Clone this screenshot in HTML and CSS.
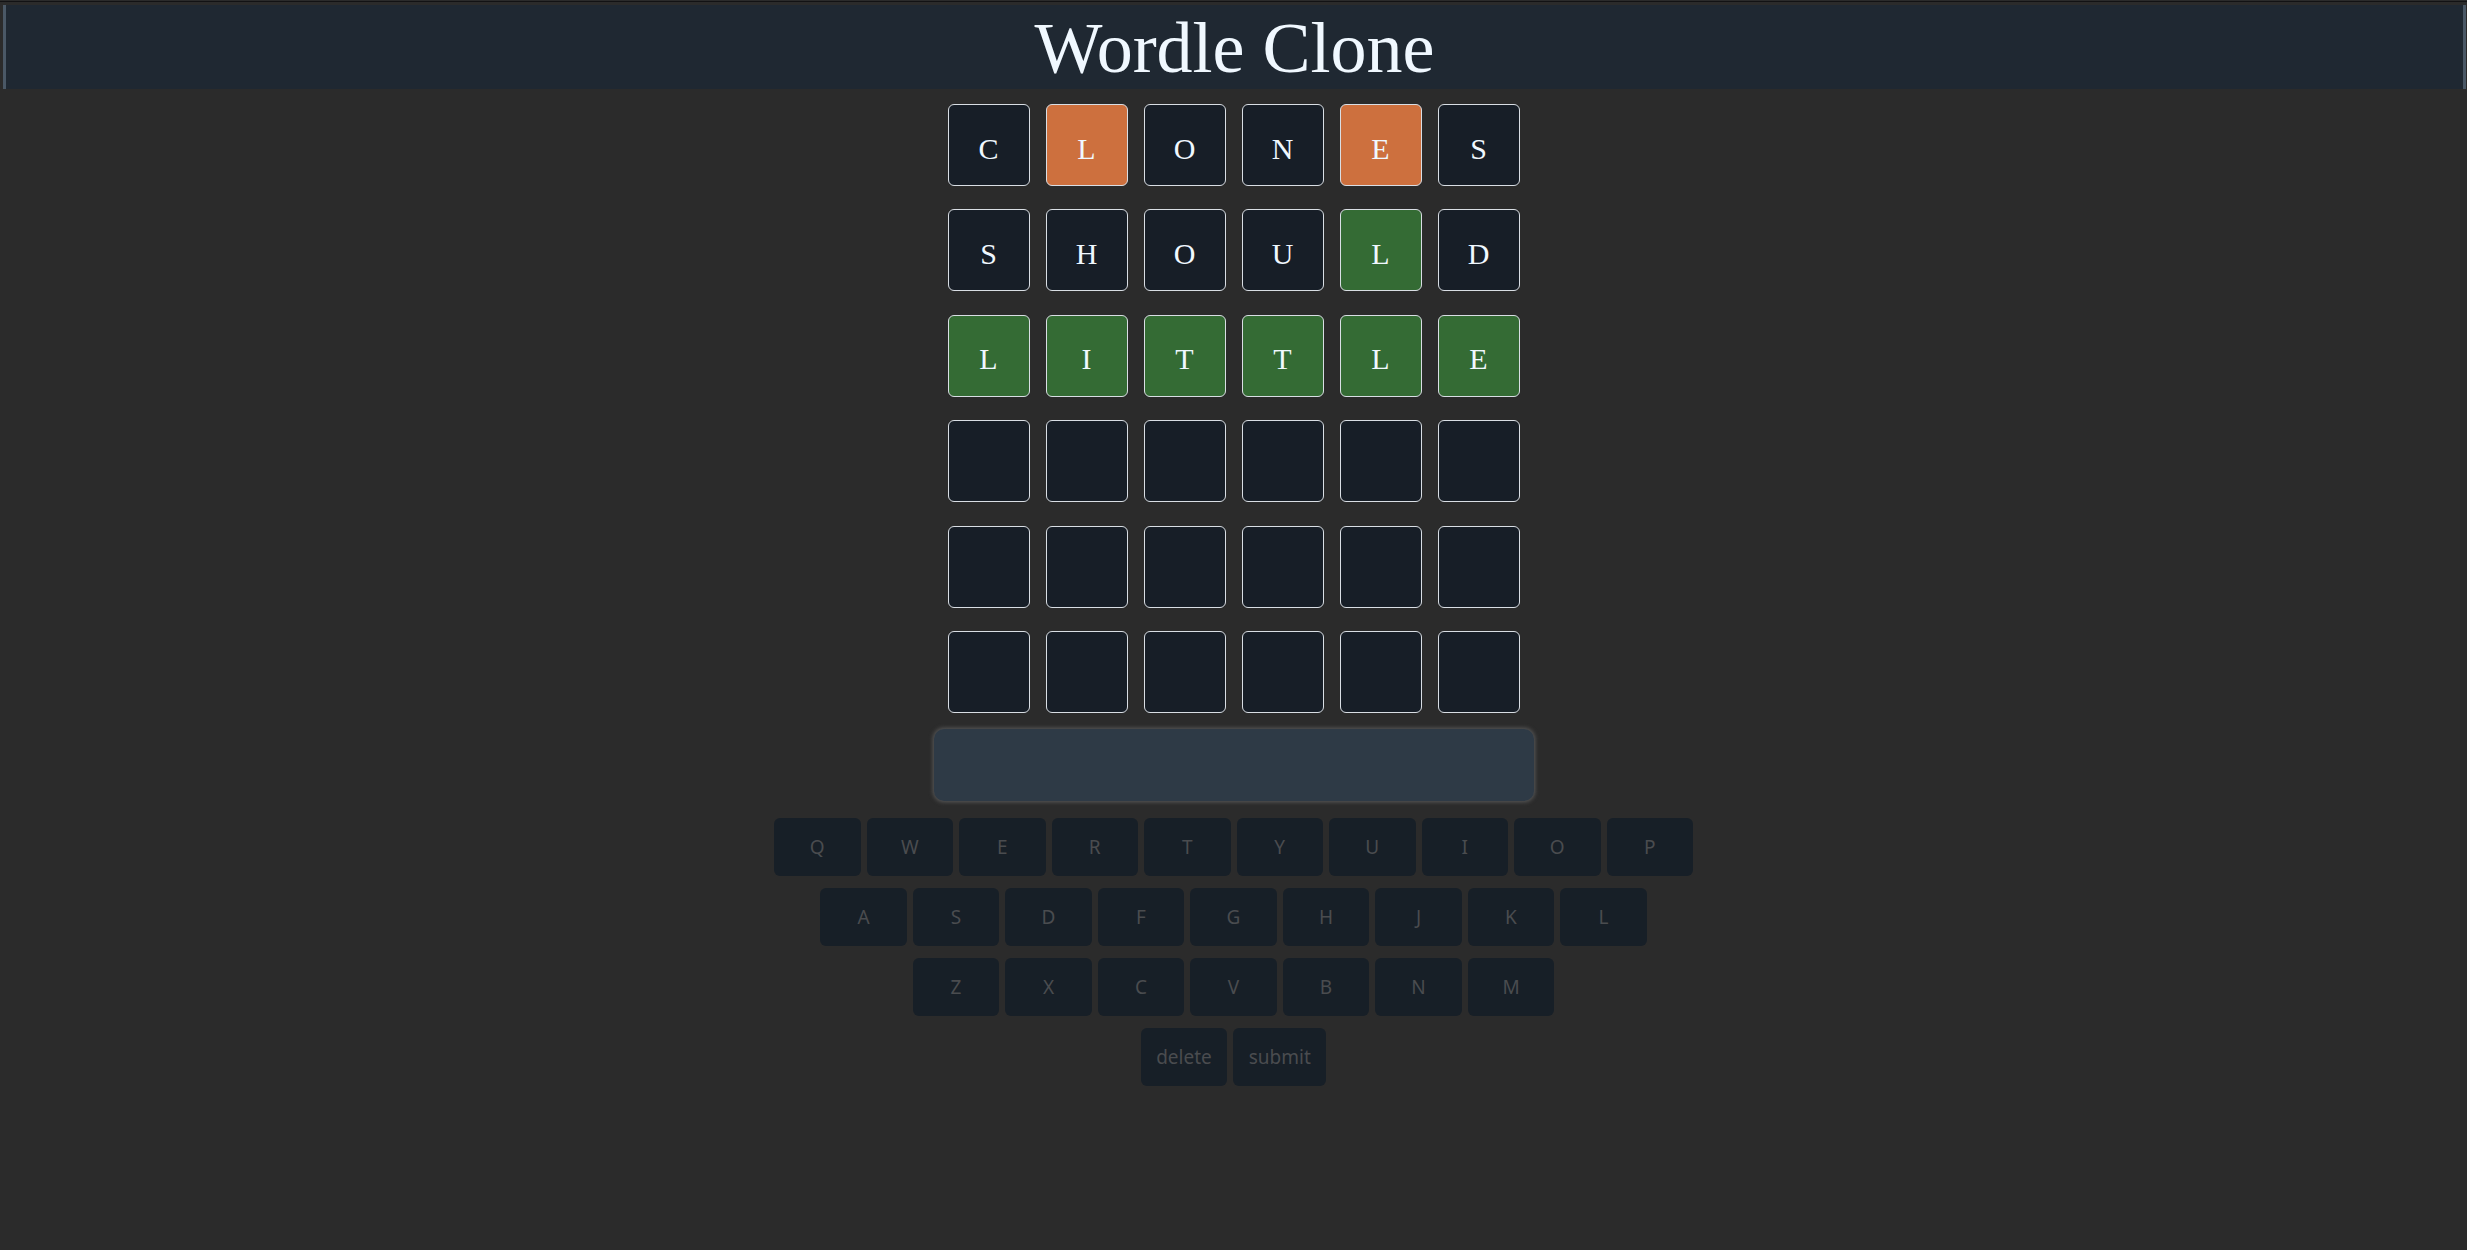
FILE: index.html
```html
<!DOCTYPE html>
<html lang="en">
<head>
<meta charset="utf-8">
<title>Wordle Clone</title>
<link rel="stylesheet" href="styles.css">
</head>
<body>
<header class="header"><h1 class="title">Wordle Clone</h1></header>
<main class="game">
  <div class="board">
    <div class="row">
      <div class="tile">C</div><div class="tile tile-present">L</div><div class="tile">O</div><div class="tile">N</div><div class="tile tile-present">E</div><div class="tile">S</div>
    </div>
    <div class="row">
      <div class="tile">S</div><div class="tile">H</div><div class="tile">O</div><div class="tile">U</div><div class="tile tile-correct">L</div><div class="tile">D</div>
    </div>
    <div class="row">
      <div class="tile tile-correct">L</div><div class="tile tile-correct">I</div><div class="tile tile-correct">T</div><div class="tile tile-correct">T</div><div class="tile tile-correct">L</div><div class="tile tile-correct">E</div>
    </div>
    <div class="row">
      <div class="tile"></div><div class="tile"></div><div class="tile"></div><div class="tile"></div><div class="tile"></div><div class="tile"></div>
    </div>
    <div class="row">
      <div class="tile"></div><div class="tile"></div><div class="tile"></div><div class="tile"></div><div class="tile"></div><div class="tile"></div>
    </div>
    <div class="row">
      <div class="tile"></div><div class="tile"></div><div class="tile"></div><div class="tile"></div><div class="tile"></div><div class="tile"></div>
    </div>
  </div>
  <input class="guess-input" type="text" disabled>
  <div class="keyboard">
    <div class="key-row">
      <button class="key" disabled>Q</button><button class="key" disabled>W</button><button class="key" disabled>E</button><button class="key" disabled>R</button><button class="key" disabled>T</button><button class="key" disabled>Y</button><button class="key" disabled>U</button><button class="key" disabled>I</button><button class="key" disabled>O</button><button class="key" disabled>P</button>
    </div>
    <div class="key-row">
      <button class="key" disabled>A</button><button class="key" disabled>S</button><button class="key" disabled>D</button><button class="key" disabled>F</button><button class="key" disabled>G</button><button class="key" disabled>H</button><button class="key" disabled>J</button><button class="key" disabled>K</button><button class="key" disabled>L</button>
    </div>
    <div class="key-row">
      <button class="key" disabled>Z</button><button class="key" disabled>X</button><button class="key" disabled>C</button><button class="key" disabled>V</button><button class="key" disabled>B</button><button class="key" disabled>N</button><button class="key" disabled>M</button>
    </div>
    <div class="key-row">
      <button class="key key-action" disabled>delete</button><button class="key key-action" disabled>submit</button>
    </div>
  </div>
</main>
</body>
</html>
```

FILE: styles.css
```css
html {
  background: #2b2b2b;
}

body {
  margin: 0;
  padding-top: 5px;
  background: #2b2b2b linear-gradient(#2b2b2b 1px, #121214 1px, #121214 2px, #2b2b2b 2px) no-repeat top left / 100% 5px;
  font-family: "Liberation Serif", "Times New Roman", serif;
}

.header {
  margin: 0 1px 0 3px;
  height: 84px;
  background: #1f2832;
  border-left: 3px solid #4a5866;
  border-right: 3px solid #4a5866;
  text-align: center;
}

.title {
  margin: 0;
  padding-top: 2px;
  font-weight: normal;
  font-size: 72px;
  line-height: 82px;
  color: #f0f8ff;
}

.game {
  display: flex;
  flex-direction: column;
  align-items: center;
}

.board {
  margin-top: 15px;
  display: flex;
  flex-direction: column;
  gap: 23.4px;
}

.row {
  display: flex;
  gap: 16px;
}

.tile {
  box-sizing: border-box;
  width: 82px;
  height: 82px;
  border: 1px solid #d9dee4;
  border-radius: 6px;
  background: #171e27;
  color: #f0f8ff;
  font-size: 30px;
  display: flex;
  align-items: center;
  justify-content: center;
  padding-top: 7px;
}

.tile-present {
  background: #cd703e;
}

.tile-correct {
  background: #346b34;
}

.guess-input {
  box-sizing: border-box;
  margin: 16px 0 0;
  width: 600px;
  height: 72px;
  background: #2e3a46;
  border: 0;
  border-radius: 10px;
  box-shadow: 0 0 4px 1px #5a5a5a;
  outline: none;
}

.keyboard {
  margin-top: 17px;
  display: flex;
  flex-direction: column;
  align-items: center;
  gap: 12px;
}

.key-row {
  display: flex;
  gap: 6px;
}

.key {
  box-sizing: border-box;
  min-width: 86.5px;
  height: 58px;
  padding: 0 15.5px;
  border: 0;
  border-radius: 6px;
  background: #171f27;
  color: #4a4c4f;
  font-family: "Noto Sans", "Open Sans", sans-serif;
  font-size: 19px;
}
```
